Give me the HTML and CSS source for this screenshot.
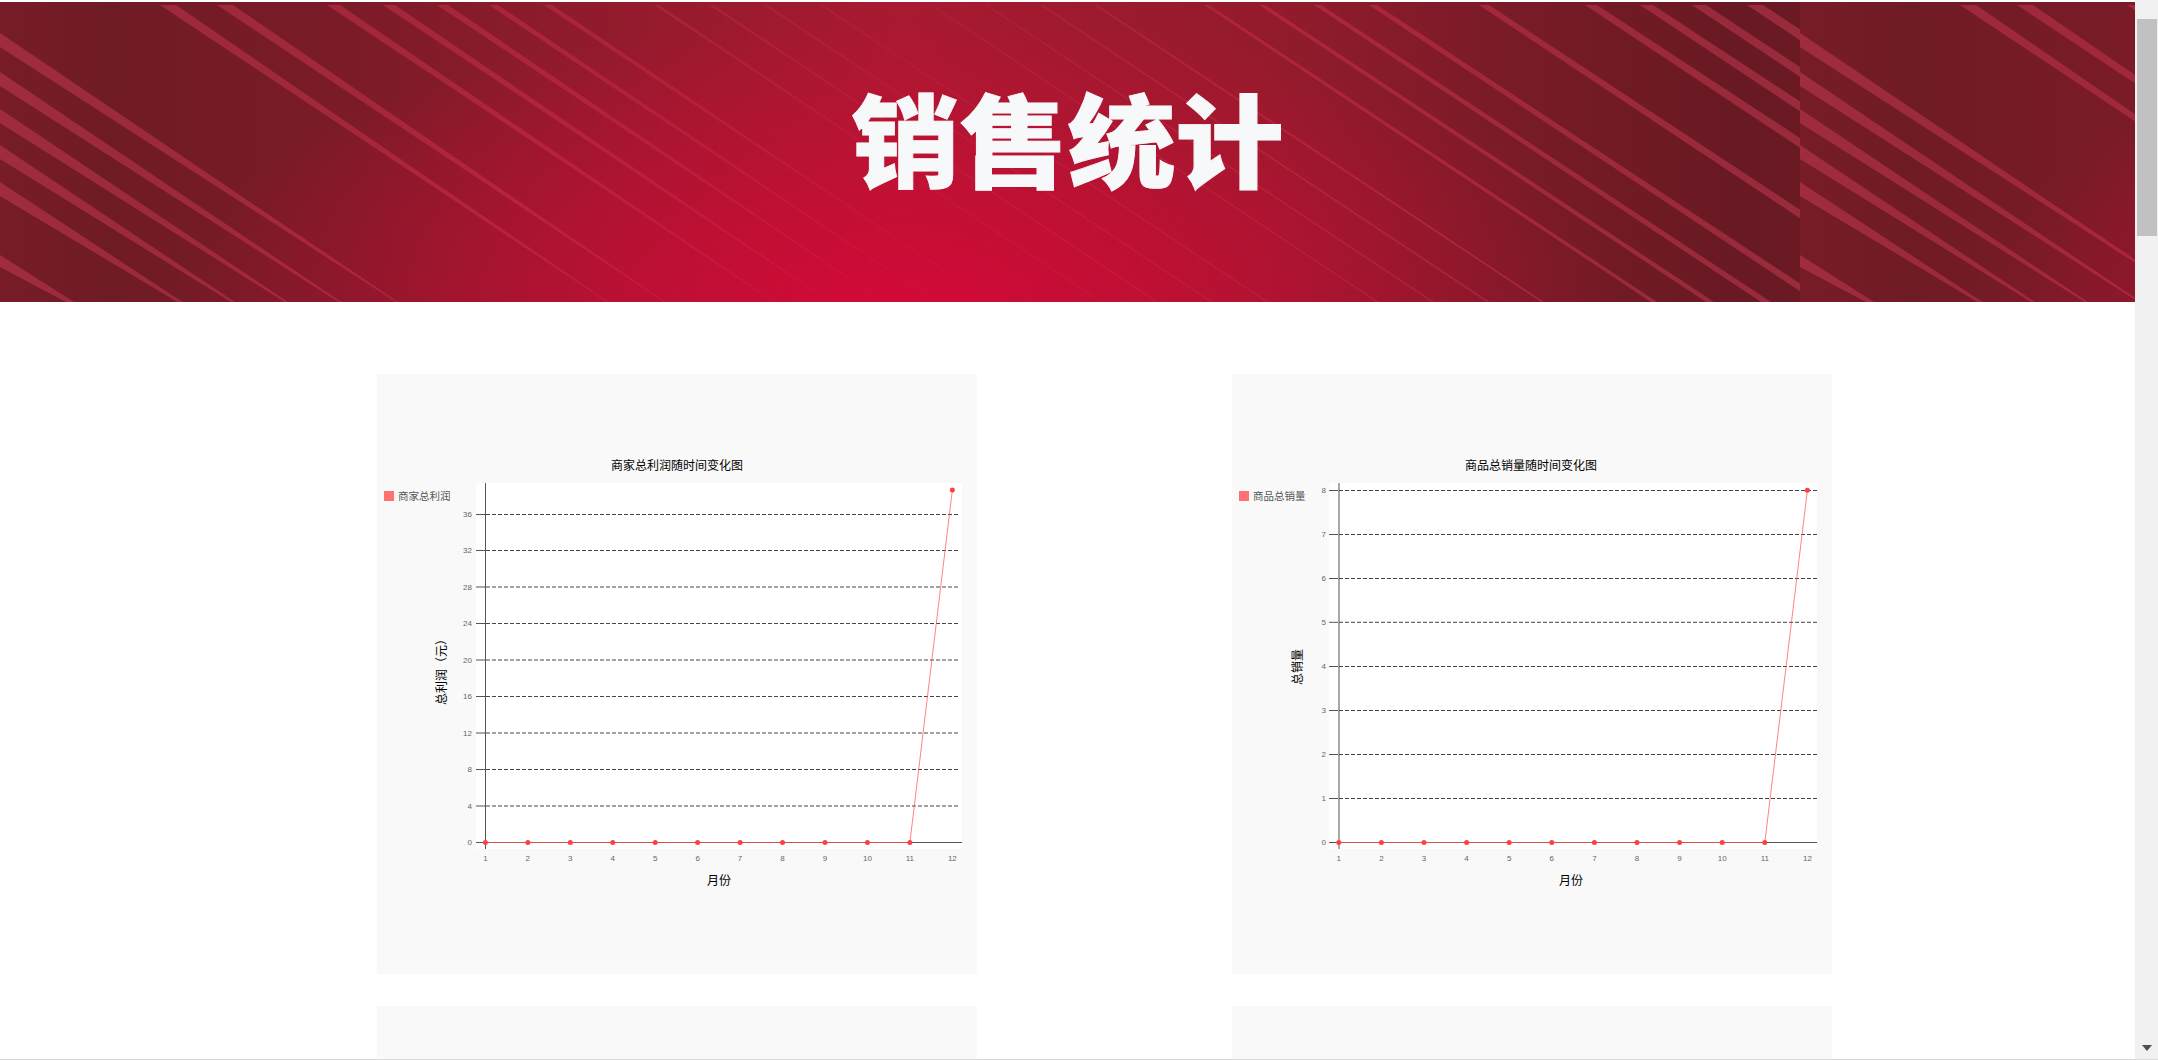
FILE: index.html
```html
<!DOCTYPE html>
<html lang="zh-CN">
<head>
    <meta charset="UTF-8">
    <meta name="viewport" content="width=device-width, initial-scale=1.0">
    <title>销售统计</title>
    <link rel="stylesheet" href="styles.css">
</head>
<body>
    <div class="page">
        <header class="banner">
            <!-- banner art tiles every 1800px, like a repeated background -->
            <svg class="banner-art" width="2135" height="300" aria-hidden="true">
                <defs>
                    <linearGradient id="bannerBase" gradientUnits="userSpaceOnUse" x1="0" y1="0" x2="1800" y2="0">
                        <stop offset="0" stop-color="#771c28"/>
                        <stop offset="0.06" stop-color="#6f1b25"/>
                        <stop offset="0.2" stop-color="#7c1b28"/>
                        <stop offset="0.3" stop-color="#8c1b2b"/>
                        <stop offset="0.5" stop-color="#a81a30"/>
                        <stop offset="0.7" stop-color="#941b2c"/>
                        <stop offset="0.85" stop-color="#771b27"/>
                        <stop offset="0.97" stop-color="#681923"/>
                        <stop offset="1" stop-color="#6b1a24"/>
                    </linearGradient>
                    <radialGradient id="bannerGlow" gradientUnits="userSpaceOnUse" cx="0" cy="0" r="1" gradientTransform="translate(900 300) scale(720 290)">
                        <stop offset="0" stop-color="#d20a37"/>
                        <stop offset="1" stop-color="#d20a37" stop-opacity="0"/>
                    </radialGradient>
                    <linearGradient id="bannerStripe" gradientUnits="userSpaceOnUse" x1="0" y1="0" x2="1800" y2="0">
                        <stop offset="0" stop-color="#d2405a" stop-opacity="0.45"/>
                        <stop offset="0.3" stop-color="#d2304f" stop-opacity="0.45"/>
                        <stop offset="0.5" stop-color="#d2304f" stop-opacity="0.15"/>
                        <stop offset="0.7" stop-color="#d2304f" stop-opacity="0.45"/>
                        <stop offset="1" stop-color="#d2405a" stop-opacity="0.45"/>
                    </linearGradient>
                    <pattern id="bannerTile" patternUnits="userSpaceOnUse" width="1800" height="300">
                        <rect width="1800" height="300" fill="url(#bannerBase)"/>
                        <rect width="1800" height="300" fill="url(#bannerGlow)"/>
                        <!-- stripes taper towards the middle of the tile -->
                        <path fill="url(#bannerStripe)" d="M0 31L398 300H396L0 45Z
                            M0 70L341.5 300H338.5L0 84Z
                            M0 107L288 300H284.5L0 121Z
                            M0 143L235 300H231L0 157Z
                            M0 180L182.5 300H177.5L0 194Z
                            M0 253L74 300H66L0 265Z
                            M160 3H176L608.5 300H607Z
                            M217 3H233L665.5 300H664Z
                            M327 3H340L775 300H774Z
                            M383 3H395L831 300H830Z
                            M437 3H448L885 300H884Z
                            M489 3H498L937 300H936Z
                            M544 3H552L992 300H991Z
                            M654 3H659L1102 300H1101Z
                            M709 3H713.5L1157.5 300H1156Z
                            M764 3H768L1212.5 300H1211Z
                            M820 3H823L1268.5 300H1267Z
                            M930 3H932.5L1378.5 300H1377Z
                            M985 3H987.5L1434 300H1432Z
                            M1040 3H1043L1489.5 300H1487Z
                            M1094 3H1097.5L1544 300H1541Z
                            M1204 3H1209L1657 300H1651Z
                            M1259 3H1265L1714 300H1706Z
                            M1314 3H1321L1771 300H1761Z
                            M1369 3H1377L1828 300H1816Z
                            M1479 3H1489L1940 300H1926Z
                            M1585 3H1597L2050 300H2032Z
                            M1640 3H1653L2105 300H2087Z
                            M1692 3H1706L2157 300H2139Z
                            M1747 3H1763L2212 300H2194Z"/>
                    </pattern>
                </defs>
                <rect width="2135" height="300" fill="url(#bannerTile)"/>
            </svg>
            <h1 class="banner-title">销售统计</h1>
        </header>

        <ul class="chart-grid">
            <li class="chart-card">
                <svg class="chart" width="600" height="600">
                    <text class="chart-title" x="300" y="90">商家总利润随时间变化图</text>
                    <rect class="legend-swatch" x="7" y="117" width="10" height="10"/>
                    <text class="legend-label" x="21" y="121">商家总利润</text>
                    <rect class="plot-bg" x="99" y="109" width="486" height="366"/>
                    <path class="grid-line" d="M109 140.5H582M109 176.5H582M109 213H582M109 249.5H582M109 286H582M109 322.5H582M109 359H582M109 395.5H582M109 432H582"/>
                    <path class="tick" d="M99 140.5H108M99 176.5H108M99 213H108M99 249.5H108M99 286H108M99 322.5H108M99 359H108M99 395.5H108M99 432H108"/>
                    <path class="axis" d="M108.5 109V475M99 468.5H585"/>
                    <path class="series" d="M108.4 468.5H532.9L575.35 116"/>
                    <path class="series-dots" d="M108.4 468.5h0M150.85 468.5h0M193.3 468.5h0M235.75 468.5h0M278.2 468.5h0M320.65 468.5h0M363.1 468.5h0M405.55 468.5h0M448 468.5h0M490.45 468.5h0M532.9 468.5h0M575.35 116h0"/>
                    <g class="y-labels">
                        <text x="95" y="140.5">36</text>
                        <text x="95" y="176.5">32</text>
                        <text x="95" y="213">28</text>
                        <text x="95" y="249.5">24</text>
                        <text x="95" y="286">20</text>
                        <text x="95" y="322.5">16</text>
                        <text x="95" y="359">12</text>
                        <text x="95" y="395.5">8</text>
                        <text x="95" y="432">4</text>
                        <text x="95" y="468.5">0</text>
                    </g>
                    <g class="x-labels">
                        <text x="108.4" y="484">1</text>
                        <text x="150.85" y="484">2</text>
                        <text x="193.3" y="484">3</text>
                        <text x="235.75" y="484">4</text>
                        <text x="278.2" y="484">5</text>
                        <text x="320.65" y="484">6</text>
                        <text x="363.1" y="484">7</text>
                        <text x="405.55" y="484">8</text>
                        <text x="448" y="484">9</text>
                        <text x="490.45" y="484">10</text>
                        <text x="532.9" y="484">11</text>
                        <text x="575.35" y="484">12</text>
                    </g>
                    <text class="axis-name" transform="rotate(-90 63 295)" x="63" y="295">总利润（元）</text>
                    <text class="axis-name" x="342" y="505">月份</text>
                </svg>
            </li>
            <li class="chart-card">
                <svg class="chart" width="600" height="600">
                    <text class="chart-title" x="299" y="90">商品总销量随时间变化图</text>
                    <rect class="legend-swatch" x="7" y="117" width="10" height="10"/>
                    <text class="legend-label" x="21" y="121">商品总销量</text>
                    <rect class="plot-bg" x="97" y="109" width="488" height="366"/>
                    <path class="grid-line" d="M107 116.5H585M107 160.5H585M107 204.5H585M107 248.3H585M107 292.5H585M107 336.5H585M107 380.5H585M107 424.5H585"/>
                    <path class="tick" d="M97 116.5H106M97 160.5H106M97 204.5H106M97 248.3H106M97 292.5H106M97 336.5H106M97 380.5H106M97 424.5H106"/>
                    <path class="axis" d="M107 109V475M97 468.5H585"/>
                    <path class="series" d="M106.8 468.5H532.8L575.4 116.3"/>
                    <path class="series-dots" d="M106.8 468.5h0M149.4 468.5h0M192 468.5h0M234.6 468.5h0M277.2 468.5h0M319.8 468.5h0M362.4 468.5h0M405 468.5h0M447.6 468.5h0M490.2 468.5h0M532.8 468.5h0M575.4 116.3h0"/>
                    <g class="y-labels">
                        <text x="94" y="116.5">8</text>
                        <text x="94" y="160.5">7</text>
                        <text x="94" y="204.5">6</text>
                        <text x="94" y="248.5">5</text>
                        <text x="94" y="292.5">4</text>
                        <text x="94" y="336.5">3</text>
                        <text x="94" y="380.5">2</text>
                        <text x="94" y="424.5">1</text>
                        <text x="94" y="468.5">0</text>
                    </g>
                    <g class="x-labels">
                        <text x="106.8" y="484">1</text>
                        <text x="149.4" y="484">2</text>
                        <text x="192" y="484">3</text>
                        <text x="234.6" y="484">4</text>
                        <text x="277.2" y="484">5</text>
                        <text x="319.8" y="484">6</text>
                        <text x="362.4" y="484">7</text>
                        <text x="405" y="484">8</text>
                        <text x="447.6" y="484">9</text>
                        <text x="490.2" y="484">10</text>
                        <text x="532.8" y="484">11</text>
                        <text x="575.4" y="484">12</text>
                    </g>
                    <text class="axis-name" transform="rotate(-90 64 293)" x="64" y="293">总销量</text>
                    <text class="axis-name" x="339" y="505">月份</text>
                </svg>
            </li>
            <li class="chart-card"></li>
            <li class="chart-card"></li>
        </ul>
    </div>

    <!-- window scrollbar as it appears in the screenshot -->
    <div class="scrollbar">
        <div class="scrollbar-thumb"></div>
        <div class="scrollbar-arrow"></div>
    </div>
    <div class="bottom-edge"></div>
</body>
</html>
```

FILE: styles.css
```css
html, body {
    margin: 0;
    height: 100%;
    overflow: hidden;
    background-color: #fff;
}
body {
    font-family: "Liberation Sans", "Noto Sans CJK SC", sans-serif;
}
.page {
    width: 2135px;
    padding-top: 2px;
}

/* banner */
.banner {
    position: relative;
    height: 300px;
    display: flex;
    align-items: center;
    justify-content: center;
    overflow: hidden;
}
.banner-art {
    position: absolute;
    top: 0;
    left: 0;
}
.banner-title {
    position: relative;
    margin: 0 0 33px;
    font-family: "Noto Sans CJK SC", sans-serif;
    font-size: 108px;
    font-weight: 900;
    line-height: 1;
    color: #f7f8fa;
    -webkit-text-stroke: 1px #f7f8fa;
    transform: scaleY(0.94);
}

/* chart cards */
.chart-grid {
    list-style: none;
    margin: 0;
    padding: 72px 0 0 377px;
    display: grid;
    grid-template-columns: 600px 600px;
    grid-auto-rows: 600px;
    gap: 32px 255px;
}
.chart-card {
    background-color: #f9f9f9;
}
.chart {
    display: block;
}
.chart text {
    font-family: "Noto Sans CJK SC", sans-serif;
    dominant-baseline: central;
}
.chart-title {
    font-size: 12px;
    fill: #000;
    text-anchor: middle;
}
.legend-swatch {
    fill: #ff7270;
}
.chart .legend-label {
    font-size: 10.5px;
    fill: #555;
}
.plot-bg {
    fill: #fff;
}
.grid-line {
    fill: none;
    stroke: #444;
    stroke-dasharray: 4 2;
}
.tick {
    fill: none;
    stroke: #555;
}
.axis {
    fill: none;
    stroke: #555;
}
.series {
    fill: none;
    stroke: #ff5050;
    stroke-opacity: 0.7;
}
.series-dots {
    fill: none;
    stroke: #ff4040;
    stroke-width: 5;
    stroke-linecap: round;
}
.chart .y-labels text,
.chart .x-labels text {
    font-family: "Liberation Sans", sans-serif;
    font-size: 8px;
    fill: #666;
}
.y-labels text {
    text-anchor: end;
}
.x-labels text {
    text-anchor: middle;
}
.axis-name {
    font-size: 12px;
    fill: #000;
    text-anchor: middle;
}

/* fake window chrome */
.scrollbar {
    position: fixed;
    top: 0;
    right: 0;
    bottom: 0;
    width: 23px;
    background-color: #f1f1f1;
}
.scrollbar-thumb {
    position: absolute;
    top: 19px;
    left: 2px;
    width: 20px;
    height: 217px;
    background-color: #c1c1c1;
}
.scrollbar-arrow {
    position: absolute;
    bottom: 9px;
    left: 7px;
    border-top: 6px solid #505050;
    border-left: 5px solid transparent;
    border-right: 5px solid transparent;
}
.bottom-edge {
    position: fixed;
    left: 0;
    right: 0;
    bottom: 0;
    height: 1px;
    background-color: #d9d9d9;
}
```
